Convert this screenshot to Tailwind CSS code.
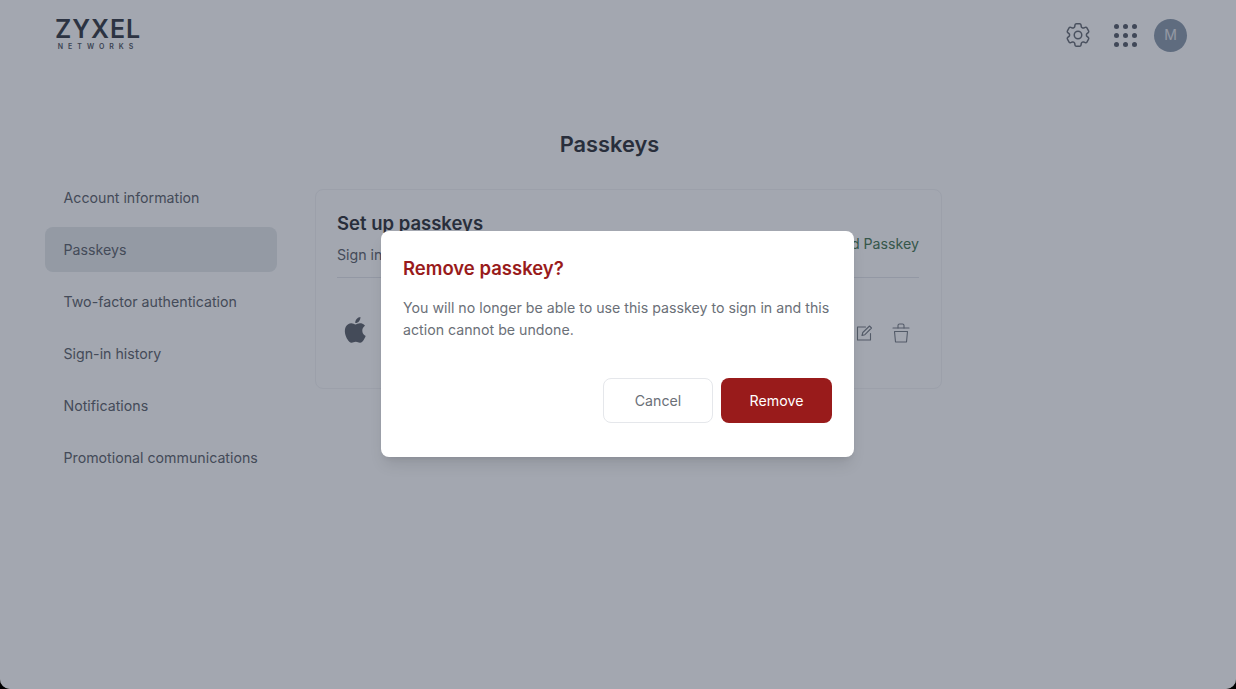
<!DOCTYPE html>
<html lang="en">
  <head>
    <meta charset="UTF-8" />
    <meta name="viewport" content="width=device-width, initial-scale=1.0" />
    <title>Passkeys</title>
    <script src="https://cdn.jsdelivr.net/npm/@tailwindcss/browser@4"></script>
  </head>
  <body class="bg-black font-['Inter',sans-serif]">
    <div class="relative h-[689px] w-[1236px] overflow-hidden rounded-b-[10px] bg-white">
      <!-- header -->
      <header class="flex h-[70px] items-center justify-between pl-[56px] pr-[49px]">
        <div class="flex w-[84px] flex-col items-center text-[#3a3f48]">
          <span class="text-[25px] leading-[19px] font-semibold tracking-[0.9px] whitespace-nowrap">ZYXEL</span>
          <span class="mt-[4px] text-[7px] leading-[7px] font-semibold tracking-[5px] whitespace-nowrap text-[#555a64]">NETWORKS</span>
        </div>
        <div class="flex items-center">
          <svg class="h-[30px] w-[30px] text-[#6b7078]" viewBox="0 0 24 24" fill="none" stroke="currentColor" stroke-width="1.2" stroke-linecap="round" stroke-linejoin="round">
            <path d="M9.594 3.94c.09-.542.56-.94 1.11-.94h2.593c.55 0 1.02.398 1.11.94l.213 1.281c.063.374.313.686.645.87.074.04.147.083.22.127.325.196.72.257 1.075.124l1.217-.456a1.125 1.125 0 0 1 1.37.49l1.296 2.247a1.125 1.125 0 0 1-.26 1.431l-1.003.827c-.293.241-.438.613-.43.992a7.723 7.723 0 0 1 0 .255c-.008.378.137.75.43.991l1.004.827c.424.35.534.955.26 1.43l-1.298 2.247a1.125 1.125 0 0 1-1.369.491l-1.217-.456c-.355-.133-.75-.072-1.076.124a6.47 6.47 0 0 1-.22.128c-.331.183-.581.495-.644.869l-.213 1.281c-.09.543-.56.94-1.11.94h-2.594c-.55 0-1.019-.398-1.11-.94l-.213-1.281c-.062-.374-.312-.686-.644-.87a6.52 6.52 0 0 1-.22-.127c-.325-.196-.72-.257-1.076-.124l-1.217.456a1.125 1.125 0 0 1-1.369-.49l-1.297-2.247a1.125 1.125 0 0 1 .26-1.431l1.004-.827c.292-.24.437-.613.43-.991a6.932 6.932 0 0 1 0-.255c.007-.38-.138-.751-.43-.992l-1.004-.827a1.125 1.125 0 0 1-.26-1.43l1.297-2.247a1.125 1.125 0 0 1 1.37-.491l1.216.456c.356.133.751.072 1.076-.124.072-.044.146-.086.22-.128.332-.183.582-.495.644-.869l.214-1.28Z" />
            <circle cx="12" cy="12" r="3" />
          </svg>
          <div class="ml-[21px] grid grid-cols-3 gap-[4px]">
            <span class="h-[5px] w-[5px] rounded-full bg-[#5b616d]"></span>
            <span class="h-[5px] w-[5px] rounded-full bg-[#5b616d]"></span>
            <span class="h-[5px] w-[5px] rounded-full bg-[#5b616d]"></span>
            <span class="h-[5px] w-[5px] rounded-full bg-[#5b616d]"></span>
            <span class="h-[5px] w-[5px] rounded-full bg-[#5b616d]"></span>
            <span class="h-[5px] w-[5px] rounded-full bg-[#5b616d]"></span>
            <span class="h-[5px] w-[5px] rounded-full bg-[#5b616d]"></span>
            <span class="h-[5px] w-[5px] rounded-full bg-[#5b616d]"></span>
            <span class="h-[5px] w-[5px] rounded-full bg-[#5b616d]"></span>
          </div>
          <div class="ml-[17px] flex h-[33px] w-[33px] items-center justify-center rounded-full bg-[#8e9dae] text-sm text-[#e5e7eb]">M</div>
        </div>
      </header>

      <h1 class="mt-[60px] pr-[17px] text-center text-[21.8px] leading-[28px] font-semibold text-[#33363d]">Passkeys</h1>

      <div class="mt-[31px] flex items-start pl-[45px]">
        <!-- side menu -->
        <nav class="-mt-[14px] flex w-[232px] shrink-0 flex-col gap-[7px] text-[14.2px] whitespace-nowrap text-[#62666e]">
          <a class="flex h-[45px] items-center px-[18.5px]">Account information</a>
          <a class="flex h-[45px] items-center rounded-lg bg-[#e6eaec] px-[18.5px]">Passkeys</a>
          <a class="flex h-[45px] items-center px-[18.5px]">Two-factor authentication</a>
          <a class="flex h-[45px] items-center px-[18.5px]">Sign-in history</a>
          <a class="flex h-[45px] items-center px-[18.5px]">Notifications</a>
          <a class="flex h-[45px] items-center px-[18.5px]">Promotional communications</a>
        </nav>

        <!-- passkeys card -->
        <section class="ml-[38px] h-[200px] w-[627px] rounded-lg border border-gray-100 pt-[21px] pl-[21px] pr-[22px]">
          <div class="flex items-end justify-between border-b border-gray-200 pb-[12px] text-[14.2px] leading-[20px]">
            <div>
              <h2 class="text-[18.5px] leading-[24px] font-semibold text-[#33363d]">Set up passkeys</h2>
              <p class="mt-[10px] text-[#62666e]">Sign in with your fingerprint, face or screen lock</p>
            </div>
            <a class="mb-[11px] text-[#4a7a55]">Add Passkey</a>
          </div>
          <div class="mt-[40px] flex items-center justify-between pr-[9px] text-[#7b8088]">
            <svg class="h-[30px] w-[30px] translate-x-[4px] -translate-y-[3px] text-[#62666e]" viewBox="0 0 24 24" fill="currentColor">
              <path d="M17.05 12.54c-.03-2.6 2.12-3.85 2.22-3.91-1.21-1.77-3.09-2.01-3.76-2.04-1.6-.16-3.12.94-3.93.94-.81 0-2.06-.92-3.39-.89-1.74.03-3.35 1.01-4.25 2.57-1.81 3.14-.46 7.8 1.3 10.35.86 1.25 1.89 2.65 3.24 2.6 1.3-.05 1.79-.84 3.36-.84 1.57 0 2.01.84 3.39.81 1.4-.02 2.28-1.27 3.14-2.53.99-1.45 1.4-2.85 1.42-2.92-.03-.01-2.72-1.04-2.74-4.14ZM14.47 4.9c.72-.87 1.2-2.08 1.07-3.28-1.03.04-2.28.69-3.02 1.55-.66.77-1.24 2-1.09 3.18 1.15.09 2.33-.58 3.04-1.45Z" />
            </svg>
            <div class="flex items-center gap-[19px]">
              <svg class="h-[18px] w-[18px]" viewBox="0 0 18 18" fill="none" stroke="currentColor" stroke-width="1.1" stroke-linecap="round" stroke-linejoin="round">
                <path d="M15.5 9.5v6.5h-13V3h8" />
                <path d="M7 11.5l.8-3L14.5 2l2 2-6.6 6.7-2.9.8Z" />
              </svg>
              <svg class="h-[20px] w-[18px]" viewBox="0 0 18 20" fill="none" stroke="currentColor" stroke-width="1.1" stroke-linecap="round" stroke-linejoin="round">
                <path d="M1 5h16" />
                <path d="M6 5V2.5C6 1.7 6.7 1 7.5 1h3c.8 0 1.5.7 1.5 1.5V5" />
                <path d="M2.5 8.5h13l-1 10.5h-11Z" />
              </svg>
            </div>
          </div>
        </section>
      </div>

      <!-- remove dialog -->
      <div class="absolute inset-0 flex items-center justify-center bg-[#19233a]/40 pb-[1px] pr-[1px]">
        <div class="h-[226px] w-[473px] rounded-lg bg-white px-[22px] pt-[24px] shadow-lg">
          <h3 class="text-[18.5px] leading-[26px] font-semibold text-[#991b1b]">Remove passkey?</h3>
          <p class="mt-[16px] text-[14.2px] leading-[22px] text-[#6b7078]">You will no longer be able to use this passkey to sign in and this action cannot be undone.</p>
          <div class="mt-[37px] flex justify-end gap-[8px] text-[14.2px]">
            <button class="h-[45px] w-[110px] rounded-lg border border-gray-200 bg-white text-[#6b7078]">Cancel</button>
            <button class="h-[45px] w-[111px] rounded-lg bg-[#991b1b] text-white">Remove</button>
          </div>
        </div>
      </div>
    </div>
  </body>
</html>
